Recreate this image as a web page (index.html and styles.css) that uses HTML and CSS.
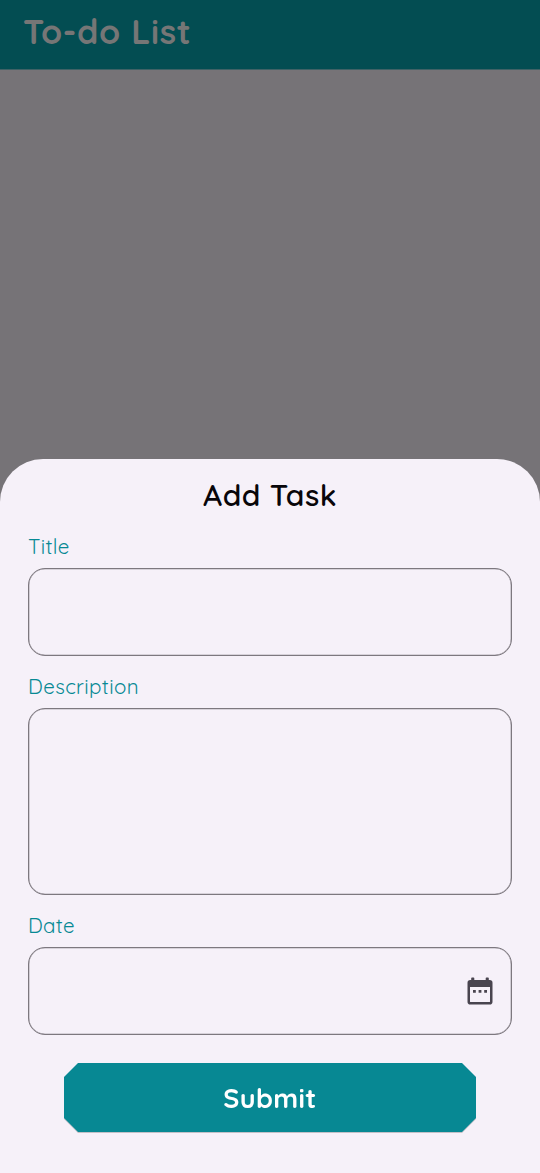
FILE: index.html
```html
<!DOCTYPE html>
<html lang="en">
<head>
<meta charset="utf-8">
<title>To-do List</title>
<link rel="stylesheet" href="styles.css">
</head>
<body>
<div class="app">
  <header class="bar"><h1 class="bar-title"><span>To-do List</span></h1></header>
  <main class="backdrop"></main>
  <form class="sheet">
    <h2 class="sheet-title"><span>Add Task</span></h2>
    <div class="field">
      <label class="label">Title</label>
      <div class="input"></div>
    </div>
    <div class="field">
      <label class="label">Description</label>
      <div class="input input-tall"></div>
    </div>
    <div class="field">
      <label class="label">Date</label>
      <div class="input">
        <svg class="calendar" width="26" height="28" viewBox="0 0 26 28">
          <path fill="#49454f" fill-rule="evenodd" d="M5 .5h1.500q.8 0 .8.8V3h11.400V1.300q0-.8.8-.8H21q.8 0 .8.8V3h.9a2.800 2.800 0 0 1 2.800 2.800v19a2.800 2.800 0 0 1-2.800 2.800H3.300a2.800 2.800 0 0 1-2.800-2.800v-19A2.800 2.800 0 0 1 3.300 3h.9V1.300q0-.8.8-.8zM3 10v14.600q0 .5.5.5h19q.5 0 .5-.5V10z"/>
          <path fill="#49454f" d="M6 13h2.800v2.800H6zm5.600 0h2.800v2.800h-2.800zm5.600 0H20v2.800h-2.800z"/>
        </svg>
      </div>
    </div>
    <div class="submit-wrap"><button class="submit" type="button"><span>Submit</span></button></div>
  </form>
</div>
</body>
</html>
```

FILE: styles.css
```css
* { box-sizing: border-box; }
body {
  margin: 0;
  background: #767377;
  font-family: Quicksand, Inter, "Open Sans", sans-serif;
}
.app { height: 1173px; display: flex; flex-direction: column; overflow: hidden; }
.bar {
  height: 70px;
  padding: 12px 0 0 23px;
  background: #034d52;
  border-bottom: 1px solid #3f6266;
}
.bar-title { margin: 0; font-size: 34px; line-height: 40px; font-weight: 700; color: #767676; letter-spacing: 0.700px; }
.backdrop { flex: 1; }
.sheet {
  height: 714px;
  padding: 16px 28px 0;
  background: #f6f1f9;
  border-radius: 43px 43px 0 0;
}
.sheet-title { margin: 0 0 17px; font-size: 30px; line-height: 40px; font-weight: 600; text-align: center; color: #08060a; letter-spacing: 0.500px; }
.field { margin-bottom: 16px; }
.label { display: block; height: 30px; margin-bottom: 6px; font-size: 20.500px; line-height: 29px; font-weight: 400; color: #078994; letter-spacing: 0.350px; }
.input {
  height: 88px;
  display: flex;
  align-items: center;
  justify-content: flex-end;
  padding: 0 18.500px 0 0;
  border: 1px solid #7d787f;
  border-radius: 17px;
  box-shadow: inset 0 0 0 0.300px #7d787f;
}
.input-tall { height: 187px; }
.submit-wrap { margin: 28px 36px 0; filter: drop-shadow(0 1px 0.500px #0003); }
.submit {
  display: block;
  width: 100%;
  height: 69px;
  padding: 0;
  border: 0;
  background: #078893;
  clip-path: polygon(14px 0, calc(100% - 14px) 0, 100% 14px, 100% calc(100% - 14px), calc(100% - 14px) 100%, 14px 100%, 0 calc(100% - 14px), 0 14px);
  color: #fff;
  font: inherit;
  font-size: 27px;
  font-weight: 700;
  letter-spacing: 0.400px;
}
```
